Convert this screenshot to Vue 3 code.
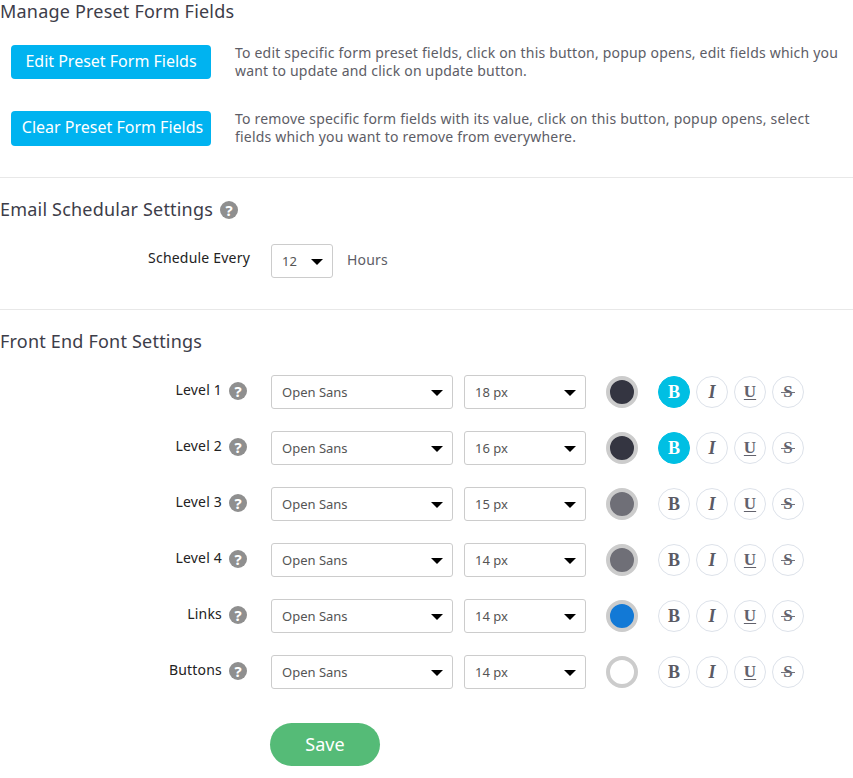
<script setup>
const presets = [
  { label: 'Edit Preset Form Fields', text: 'To edit specific form preset fields, click on this button, popup opens, edit fields which you want to update and click on update button.' },
  { label: 'Clear Preset Form Fields', text: 'To remove specific form fields with its value, click on this button, popup opens, select fields which you want to remove from everywhere.' },
]
const rows = [
  { label: 'Level 1', size: '18 px', color: '#343541', bold: true },
  { label: 'Level 2', size: '16 px', color: '#343541', bold: true },
  { label: 'Level 3', size: '15 px', color: '#6f6f77', bold: false },
  { label: 'Level 4', size: '14 px', color: '#6f6f77', bold: false },
  { label: 'Links', size: '14 px', color: '#1279d6', bold: false },
  { label: 'Buttons', size: '14 px', color: '#ffffff', bold: false },
]
</script>

<template>
  <div class="page">
    <section class="manage">
      <h2 class="heading">Manage Preset Form Fields</h2>
      <div v-for="p in presets" :key="p.label" class="preset">
        <button class="blue">{{ p.label }}</button>
        <p class="desc">{{ p.text }}</p>
      </div>
    </section>

    <section class="schedule">
      <h2 class="heading">Email Schedular Settings <span class="help big">?</span></h2>
      <div class="sched-row">
        <label class="label">Schedule Every</label>
        <div class="select s-hours"><span>12</span><i class="caret"></i></div>
        <span class="hours">Hours</span>
      </div>
    </section>

    <section class="fonts">
      <h2 class="heading">Front End Font Settings</h2>
      <div class="rows">
        <div v-for="r in rows" :key="r.label" class="row">
          <label class="label level">{{ r.label }}<span class="help">?</span></label>
          <div class="select s-font"><span>Open Sans</span><i class="caret"></i></div>
          <div class="select s-size"><span>{{ r.size }}</span><i class="caret"></i></div>
          <span class="swatch" :style="{ background: r.color }"></span>
          <div class="styles">
            <span class="st b" :class="{ on: r.bold }">B</span>
            <span class="st i">I</span>
            <span class="st u">U</span>
            <span class="st s">S</span>
          </div>
        </div>
      </div>
      <button class="save">Save</button>
    </section>
  </div>
</template>

<style scoped>
.page {
  width: 853px;
  height: 778px;
  overflow: hidden;
  font-family: "Noto Sans", sans-serif;
  color: #555;
  box-sizing: border-box;
}
.heading {
  margin: 0;
  font-size: 18px;
  font-weight: 400;
  line-height: 24px;
  letter-spacing: 0.2px;
  color: #3d3d49;
  display: flex;
  align-items: center;
  gap: 7px;
}
.manage {
  height: 178px;
  box-sizing: border-box;
  border-bottom: 1px solid #e8e8e8;
}
.manage .heading { height: 22px; margin-bottom: 23px; }
.preset {
  display: flex;
  align-items: flex-start;
  margin: 0 0 21px 11px;
  height: 45px;
}
.blue {
  width: 200px;
  height: 34px;
  flex: none;
  border: 0;
  border-radius: 4px;
  background: #00b3f0;
  color: #fff;
  font: 400 16px/32px "Noto Sans", sans-serif;
  padding: 0 0 2px;
  text-align: center;
}
.preset + .preset .blue { height: 35px; padding: 0 0 4px 3px; }
.desc {
  margin: -1px 0 0 24px;
  width: 610px;
  font-size: 14px;
  line-height: 18px;
  letter-spacing: 0.2px;
  color: #5d5d66;
}
.schedule {
  height: 132px;
  box-sizing: border-box;
  border-bottom: 1px solid #e8e8e8;
  padding-top: 19px;
}
.sched-row {
  display: flex;
  align-items: center;
  margin-top: 23px;
}
.label {
  width: 250px;
  margin-right: 21px;
  flex: none;
  font-size: 14px;
  line-height: 20px;
  letter-spacing: 0.2px;
  color: #222;
  position: relative;
  top: -3px;
  display: flex;
  justify-content: flex-end;
  align-items: center;
  gap: 7px;
  white-space: pre;
}
.label.level { top: -2px; }
.help {
  width: 18px;
  height: 18px;
  border-radius: 50%;
  background: #8f8f8f;
  color: #fff;
  font: 700 15px/18px "Noto Sans", sans-serif;
  letter-spacing: 0;
  text-align: center;
  flex: none;
  display: inline-block;
  position: relative;
  top: 1px;
  margin-right: 3px;
}
.help.big { margin-right: 0; }
.select {
  box-sizing: border-box;
  height: 34px;
  border: 1px solid #ccc;
  border-radius: 3px;
  background: #fff;
  display: flex;
  align-items: center;
  justify-content: space-between;
  padding: 0 9px 0 10px;
  font-size: 13px;
  color: #555;
  flex: none;
}
.s-hours { width: 62px; }
.s-font { width: 182px; }
.s-size { width: 122px; margin-left: 11px; }
.caret {
  width: 0;
  height: 0;
  border-left: 6px solid transparent;
  border-right: 6px solid transparent;
  border-top: 6px solid #000;
  margin-top: 1px;
}
.hours {
  margin-left: 14px;
  font-size: 14px;
  letter-spacing: 0.2px;
  color: #5d5d66;
  position: relative;
  top: -2px;
}
.fonts { padding-top: 19px; }
.rows {
  display: flex;
  flex-direction: column;
  gap: 22px;
  margin-top: 22px;
}
.row {
  display: flex;
  align-items: center;
  height: 34px;
}
.swatch {
  box-sizing: border-box;
  width: 32px;
  height: 32px;
  border-radius: 50%;
  border: 4px solid #cccccc;
  margin-left: 20px;
  flex: none;
}
.styles {
  display: flex;
  gap: 6px;
  margin-left: 20px;
}
.st {
  box-sizing: border-box;
  width: 32px;
  height: 32px;
  border-radius: 50%;
  border: 1px solid #dde2ea;
  font-family: "Liberation Serif", serif;
  font-weight: 700;
  font-size: 18px;
  line-height: 30px;
  text-align: center;
  color: #5a5a64;
  position: relative;
}
.st.b.on { background: #00bfe3; border-color: #00bfe3; color: #fff; }
.st.i { font-style: italic; }
.st.u {
  font-size: 17px;
  color: #62626c;
  text-decoration: underline;
  text-decoration-thickness: 1px;
  text-underline-offset: 2px;
}
.st.s { font-size: 17px; color: #62626c; }
.st.s::after {
  content: "";
  position: absolute;
  left: 8px;
  right: 8px;
  top: 15px;
  height: 1px;
  background: #74747c;
}
.save {
  display: block;
  width: 110px;
  height: 43px;
  margin: 34px 0 0 270px;
  border: 0;
  border-radius: 22px;
  background: #55bb77;
  color: #fff;
  font: 400 18px/43px "Noto Sans", sans-serif;
  padding: 0;
}
</style>
